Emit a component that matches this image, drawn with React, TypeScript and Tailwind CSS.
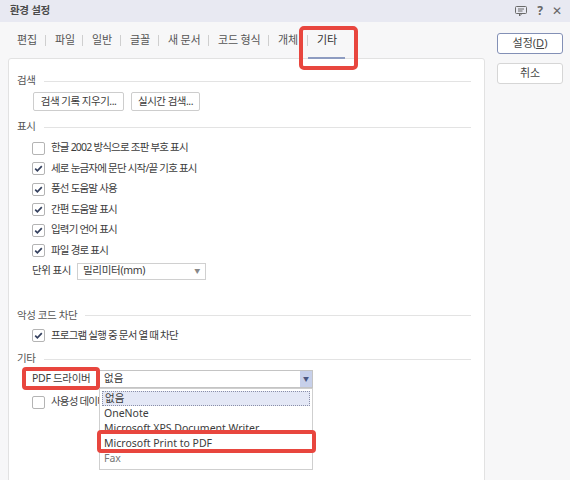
import React from "react";

const tabs = [
  { label: "편집", w: "w-[37px]" },
  { label: "파일", w: "w-[36px]" },
  { label: "일반", w: "w-[37px]" },
  { label: "글꼴", w: "w-[37px]" },
  { label: "새 문서", w: "w-[49px]" },
  { label: "코드 형식", w: "w-[59px]" },
  { label: "개체", w: "w-[38px]" },
];

function Check({ on, label }: { on: boolean; label: string }) {
  return (
    <div className="flex h-[20.5px] items-center pl-[15px]">
      <span className="flex h-[13px] w-[13px] shrink-0 items-center justify-center rounded-[2px] border border-[#b4b4b4] bg-white">
        {on ? (
          <svg width="11" height="11" viewBox="0 0 11 11">
            <path d="M2.2 5.6 L4.4 7.8 L8.8 3.2" fill="none" stroke="#34405e" strokeWidth="1.7" />
          </svg>
        ) : null}
      </span>
      <span className="ml-[6px] whitespace-nowrap text-[10.5px] tracking-[-0.8px] text-[#3c3c3c]">{label}</span>
    </div>
  );
}

function Section({ title, className }: { title: string; className?: string }) {
  return (
    <div className={"flex h-[16px] items-center " + (className ?? "")}>
      <span className="text-[10.5px] tracking-[-0.4px] text-[#555]">{title}</span>
      <div className="ml-[8px] h-px flex-1 bg-[#e3e3e3]" />
    </div>
  );
}

export default function App() {
  return (
    <div className="relative h-[480px] w-[570px] overflow-hidden bg-[#f7f7f8] font-['Noto_Sans','Noto_Sans_CJK_KR',sans-serif] text-[#3c3c3c]">
      {/* title bar */}
      <div className="flex h-[22px] items-center justify-between bg-[#e8e9f2] pl-[10px] pr-[8px]">
        <span className="text-[10.5px] font-bold tracking-[-0.3px] text-[#4a4a4a]">환경 설정</span>
        <div className="flex items-center gap-[9px] text-[#666]">
          <svg width="14" height="12" viewBox="0 0 14 12">
            <rect x="1.5" y="1.5" width="11" height="7" rx="1" fill="none" stroke="#6a6a6a" strokeWidth="1" />
            <path d="M4 4 H10 M4 6 H8.5" stroke="#6a6a6a" strokeWidth="1" />
            <path d="M5.5 8.5 L5.5 11 L8 8.5" fill="none" stroke="#6a6a6a" strokeWidth="1" />
          </svg>
          <span className="text-[12px] font-bold leading-none">?</span>
          <span className="text-[12px] leading-none">✕</span>
        </div>
      </div>

      <div className="flex">
        {/* left column */}
        <div className="w-[485px]">
          {/* tabs */}
          <div className="flex h-[36px] items-center pl-[8px]">
            {tabs.map((t) => (
              <React.Fragment key={t.label}>
                <div className={"pl-[9px] text-[11px] tracking-[-0.2px] text-[#555] " + t.w}>{t.label}</div>
                <div className="h-[11px] w-px bg-[#cfcfcf]" />
              </React.Fragment>
            ))}
            <div className="relative h-full w-[37px]">
              <div className="flex h-full items-center pl-[9px] text-[11px] text-[#333]">기타</div>
              <div className="absolute bottom-[-1px] left-0 h-[2px] w-full bg-[#8e9cc1]" />
            </div>
          </div>

          {/* panel */}
          <div className="ml-[8px] h-[440px] rounded-t-[3px] border border-[#e2e2e2] bg-white pl-[8px] pr-[13px] pt-[14px]">
            <Section title="검색" />
            <div className="mt-[3px] flex gap-[7px] pl-[16px]">
              <div className="flex h-[19px] w-[91px] items-center justify-center rounded-[2px] border border-[#cdcdcd] text-[10.5px] tracking-[-0.5px]">
                검색 기록 지우기...
              </div>
              <div className="flex h-[19px] w-[69px] items-center justify-center rounded-[2px] border border-[#cdcdcd] text-[10.5px] tracking-[-0.5px]">
                실시간 검색...
              </div>
            </div>

            <Section title="표시" className="mt-[8px]" />
            <div className="mt-[3px]">
              <Check on={false} label="한글 2002 방식으로 조판 부호 표시" />
              <Check on label="세로 눈금자에 문단 시작/끝 기호 표시" />
              <Check on label="풍선 도움말 사용" />
              <Check on label="간편 도움말 표시" />
              <Check on label="입력기 언어 표시" />
              <Check on label="파일 경로 표시" />
              <div className="flex h-[20.5px] items-center pl-[15px]">
                <span className="w-[45px] text-[10.5px] tracking-[-0.5px]">단위 표시</span>
                <div className="flex h-[17px] w-[129px] items-center justify-between border border-[#d0d0d0] pl-[5px] pr-[5px] text-[10.5px] tracking-[-0.3px]">
                  <span>밀리미터(mm)</span>
                  <span className="text-[6px] text-[#888]">▼</span>
                </div>
              </div>
            </div>

            <Section title="악성 코드 차단" className="mt-[26px]" />
            <div className="mt-[2px]">
              <Check on label="프로그램 실행 중 문서 열 때 차단" />
            </div>

            <Section title="기타" className="mt-[5px]" />
            <div className="relative mt-[3px] flex h-[18px] items-center pl-[15px]">
              <span className="w-[67px] text-[10.5px] tracking-[-0.3px]">PDF 드라이버</span>
              <div className="relative flex h-[18px] w-[214px] items-center border border-[#c4c4c4] bg-white">
                <span className="flex-1 pl-[4px] text-[10.5px]">없음</span>
                <div className="flex h-full w-[12px] items-center justify-center bg-[#c7d0ea]">
                  <span className="text-[6px] text-[#4a5680]">▼</span>
                </div>
                {/* drop list */}
                <div className="absolute left-[-1px] top-[17px] z-10 w-[214px] border border-[#cfcfcf] bg-white pb-[3px] pt-[2px] text-[10.5px] leading-[15px]">
                  <div className="mx-[2px] h-[15px] border border-dotted border-[#8a8fa8] bg-[#e4e8f6] pl-[2px] leading-[13px]">없음</div>
                  <div className="pl-[4px]">OneNote</div>
                  <div className="pl-[4px]">Microsoft XPS Document Writer</div>
                  <div className="pl-[4px]">Microsoft Print to PDF</div>
                  <div className="pl-[4px] text-[#777]">Fax</div>
                </div>
                {/* highlight on Print to PDF */}
                <div className="absolute left-[-3px] top-[59px] z-20 h-[23px] w-[219px] rounded-[4px] border-[4px] border-[#e8463e]" />
              </div>
              {/* highlight on label */}
              <div className="absolute left-[5px] top-[-3px] h-[23px] w-[78px] rounded-[4px] border-[4px] border-[#e8463e]" />
            </div>
            <div className="mt-[4px]">
              <Check on={false} label="사용성 데이터 수집 허용" />
            </div>
          </div>
        </div>

        {/* right column */}
        <div className="flex flex-col gap-[9px] pl-[12px] pt-[11px]">
          <div className="flex h-[21px] w-[66px] items-center justify-center rounded-[3px] border-[1.5px] border-[#8390b6] bg-white text-[11px] text-[#444]">
            설정(<span className="underline">D</span>)
          </div>
          <div className="flex h-[21px] w-[66px] items-center justify-center rounded-[3px] border border-[#d6d6d6] bg-white text-[11px] text-[#444]">
            취소
          </div>
        </div>
      </div>

      {/* highlight on 기타 tab */}
      <div className="absolute left-[299px] top-[26px] h-[44px] w-[59px] rounded-[5px] border-[4px] border-[#e8463e]" />
    </div>
  );
}
